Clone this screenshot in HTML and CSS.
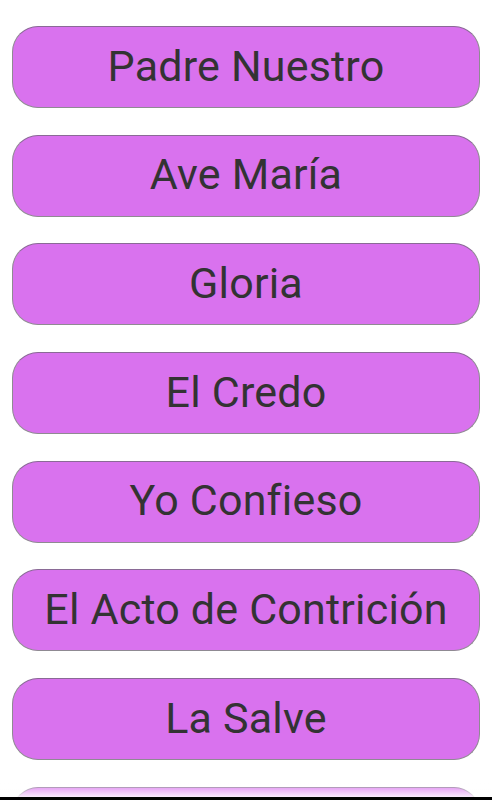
FILE: index.html
```html
<!DOCTYPE html>
<html lang="es">
<head>
    <meta charset="UTF-8">
    <meta name="viewport" content="width=device-width, initial-scale=1.0">
    <title>Oraciones</title>
    <link rel="stylesheet" href="styles.css">
</head>
<body>

<div class="prayer-list">
    <button type="button" class="prayer-btn">Padre Nuestro</button>
    <button type="button" class="prayer-btn">Ave María</button>
    <button type="button" class="prayer-btn">Gloria</button>
    <button type="button" class="prayer-btn">El Credo</button>
    <button type="button" class="prayer-btn">Yo Confieso</button>
    <button type="button" class="prayer-btn">El Acto de Contrición</button>
    <button type="button" class="prayer-btn">La Salve</button>
    <button type="button" class="prayer-btn" aria-label="Más oraciones"></button>
</div>

<div class="fade-edge"></div>
<div class="bottom-bar"></div>

</body>
</html>
```

FILE: styles.css
```css
html, body {
    margin: 0;
    padding: 0;
    height: 100%;
    overflow: hidden;
    background: #ffffff;
}

/* List of prayers */
.prayer-list {
    display: flex;
    flex-direction: column;
    gap: 26.7px;
    padding: 26px 12px 0 12px;
}

/* Buttons */
.prayer-btn {
    flex: none;
    height: 82px;
    width: 100%;
    margin: 0;
    padding: 0 0 3px 0;
    background-color: #d972ee;
    border: 1px solid #8f8a92;
    border-top-color: #8a6a96;
    border-radius: 26px;
    font-family: Roboto, "Noto Sans", sans-serif;
    font-weight: 400;
    font-size: 43px;
    letter-spacing: 0.2px;
    color: #333333;
    text-align: center;
    cursor: pointer;
}

/* Overscroll fade near the bottom */
.fade-edge {
    position: fixed;
    left: 0;
    right: 0;
    bottom: 3px;
    height: 14px;
    background: linear-gradient(to bottom, rgba(255, 255, 255, 0.1), rgba(255, 255, 255, 0.85));
}

.bottom-bar {
    position: fixed;
    left: 0;
    right: 0;
    bottom: 0;
    height: 3px;
    background: #000000;
}
```
